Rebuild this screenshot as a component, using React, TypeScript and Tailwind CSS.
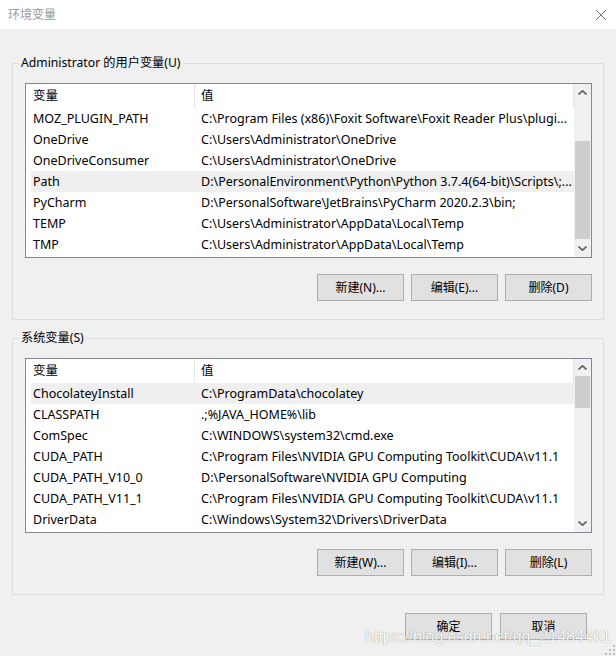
import React from 'react';

type EnvVar = {
  name: string;
  value: string;
  selected?: boolean;
};

const userVars: EnvVar[] = [
  { name: 'MOZ_PLUGIN_PATH', value: 'C:\\Program Files (x86)\\Foxit Software\\Foxit Reader Plus\\plugi...' },
  { name: 'OneDrive', value: 'C:\\Users\\Administrator\\OneDrive' },
  { name: 'OneDriveConsumer', value: 'C:\\Users\\Administrator\\OneDrive' },
  { name: 'Path', value: 'D:\\PersonalEnvironment\\Python\\Python 3.7.4(64-bit)\\Scripts\\;...', selected: true },
  { name: 'PyCharm', value: 'D:\\PersonalSoftware\\JetBrains\\PyCharm 2020.2.3\\bin;' },
  { name: 'TEMP', value: 'C:\\Users\\Administrator\\AppData\\Local\\Temp' },
  { name: 'TMP', value: 'C:\\Users\\Administrator\\AppData\\Local\\Temp' },
];

const systemVars: EnvVar[] = [
  { name: 'ChocolateyInstall', value: 'C:\\ProgramData\\chocolatey', selected: true },
  { name: 'CLASSPATH', value: '.;%JAVA_HOME%\\lib' },
  { name: 'ComSpec', value: 'C:\\WINDOWS\\system32\\cmd.exe' },
  { name: 'CUDA_PATH', value: 'C:\\Program Files\\NVIDIA GPU Computing Toolkit\\CUDA\\v11.1' },
  { name: 'CUDA_PATH_V10_0', value: 'D:\\PersonalSoftware\\NVIDIA GPU Computing' },
  { name: 'CUDA_PATH_V11_1', value: 'C:\\Program Files\\NVIDIA GPU Computing Toolkit\\CUDA\\v11.1' },
  { name: 'DriverData', value: 'C:\\Windows\\System32\\Drivers\\DriverData' },
];

function Chevron({ up }: { up?: boolean }) {
  return (
    <svg width="9" height="5" viewBox="0 0 9 5" fill="none">
      <path
        d={up ? 'M0.5 4.5 L4.5 0.8 L8.5 4.5' : 'M0.5 0.5 L4.5 4.2 L8.5 0.5'}
        stroke="#606060"
        strokeWidth="1.6"
      />
    </svg>
  );
}

// thumbTop / thumbHeight are pixel offsets inside the track
function ScrollBar({ thumbTop, thumbHeight }: { thumbTop: number; thumbHeight: number }) {
  return (
    <div className="flex w-[17px] flex-col bg-[#f0f0f0]">
      <div className="flex h-[17px] items-center justify-center">
        <Chevron up />
      </div>
      <div className="flex-1 px-[1px]">
        <div style={{ height: thumbTop }} />
        <div className="bg-[#cdcdcd]" style={{ height: thumbHeight }} />
      </div>
      <div className="flex h-[17px] items-center justify-center">
        <Chevron />
      </div>
    </div>
  );
}

function VarList({ rows, thumbTop, thumbHeight }: { rows: EnvVar[]; thumbTop: number; thumbHeight: number }) {
  return (
    <div className="flex h-[175px] border border-[#828790] bg-white text-[12.5px]">
      <div className="flex-1 overflow-hidden">
        <div className="flex h-[24px] items-center">
          <div className="w-[168px] pl-[7px] pt-[1px]">变量</div>
          <div className="h-full w-px bg-[#e5e5e5]" />
          <div className="flex-1 pl-[6px] pt-[1px]">值</div>
          <div className="h-full w-px bg-[#e5e5e5]" />
        </div>
        {rows.map((row) => (
          <div
            key={row.name}
            className={`ml-[5px] flex h-[21px] items-center whitespace-nowrap pt-[2px] ${row.selected ? 'bg-[#efefef]' : ''}`}
          >
            <div className="w-[163px] pl-[2px]">{row.name}</div>
            <div className="flex-1 overflow-hidden pl-[7px]">{row.value}</div>
          </div>
        ))}
      </div>
      <ScrollBar thumbTop={thumbTop} thumbHeight={thumbHeight} />
    </div>
  );
}

function WinButton({ children }: { children: React.ReactNode }) {
  return (
    <button className="h-[27px] w-[87px] border border-[#adadad] bg-[#e1e1e1] text-[12px] text-black">
      {children}
    </button>
  );
}

function GroupBox({ label, children }: { label: string; children: React.ReactNode }) {
  return (
    <fieldset className="border border-[#dcdcdc]">
      <legend className="ml-[6px] px-[2px] text-[12.2px] leading-[18px]">{label}</legend>
      <div className="pb-[18px] pl-[12px] pr-[11px] pt-[11px]">{children}</div>
    </fieldset>
  );
}

export default function App() {
  return (
    <div className="relative h-[656px] w-[616px] overflow-hidden bg-[#f0f0f0] text-[12px] text-black [font-family:'Noto_Sans','Noto_Sans_CJK_SC',sans-serif]">
      {/* title bar */}
      <div className="flex h-[29px] items-center justify-between bg-white pl-[8px] pr-[10px]">
        <span className="text-[#999999]">环境变量</span>
        <svg width="10" height="10" viewBox="0 0 10 10">
          <path d="M0 0 L10 10 M10 0 L0 10" stroke="#777777" strokeWidth="1" />
        </svg>
      </div>

      <div className="px-[12px] pt-[25px]">
        <GroupBox label="Administrator 的用户变量(U)">
          <VarList rows={userVars} thumbTop={40} thumbHeight={98} />
          <div className="mt-[16px] flex justify-end gap-[7px]">
            <WinButton>新建(N)...</WinButton>
            <WinButton>编辑(E)...</WinButton>
            <WinButton>删除(D)</WinButton>
          </div>
        </GroupBox>

        <div className="mt-[9px]">
          <GroupBox label="系统变量(S)">
            <VarList rows={systemVars} thumbTop={0} thumbHeight={32} />
            <div className="mt-[16px] flex justify-end gap-[7px]">
              <WinButton>新建(W)...</WinButton>
              <WinButton>编辑(I)...</WinButton>
              <WinButton>删除(L)</WinButton>
            </div>
          </GroupBox>
        </div>

        <div className="mt-[18px] flex justify-end gap-[8px] pr-[17px]">
          <WinButton>确定</WinButton>
          <WinButton>取消</WinButton>
        </div>
      </div>

      {/* watermark */}
      <div className="absolute left-[365px] top-[628px] text-[16px] leading-[18px] text-white opacity-90 [font-family:'Liberation_Sans',Arial,sans-serif] [text-shadow:0_0_1px_rgba(0,0,0,0.55)]">
        https://blog.csdn.net/qq_21484461
      </div>

      {/* size grip */}
      <svg className="absolute bottom-[1px] right-[1px]" width="10" height="10" viewBox="0 0 10 10">
        <rect x="8" y="0" width="2" height="2" fill="#bcbcbc" />
        <rect x="4" y="4" width="2" height="2" fill="#bcbcbc" />
        <rect x="8" y="4" width="2" height="2" fill="#bcbcbc" />
        <rect x="0" y="8" width="2" height="2" fill="#bcbcbc" />
        <rect x="4" y="8" width="2" height="2" fill="#bcbcbc" />
        <rect x="8" y="8" width="2" height="2" fill="#bcbcbc" />
      </svg>
    </div>
  );
}
